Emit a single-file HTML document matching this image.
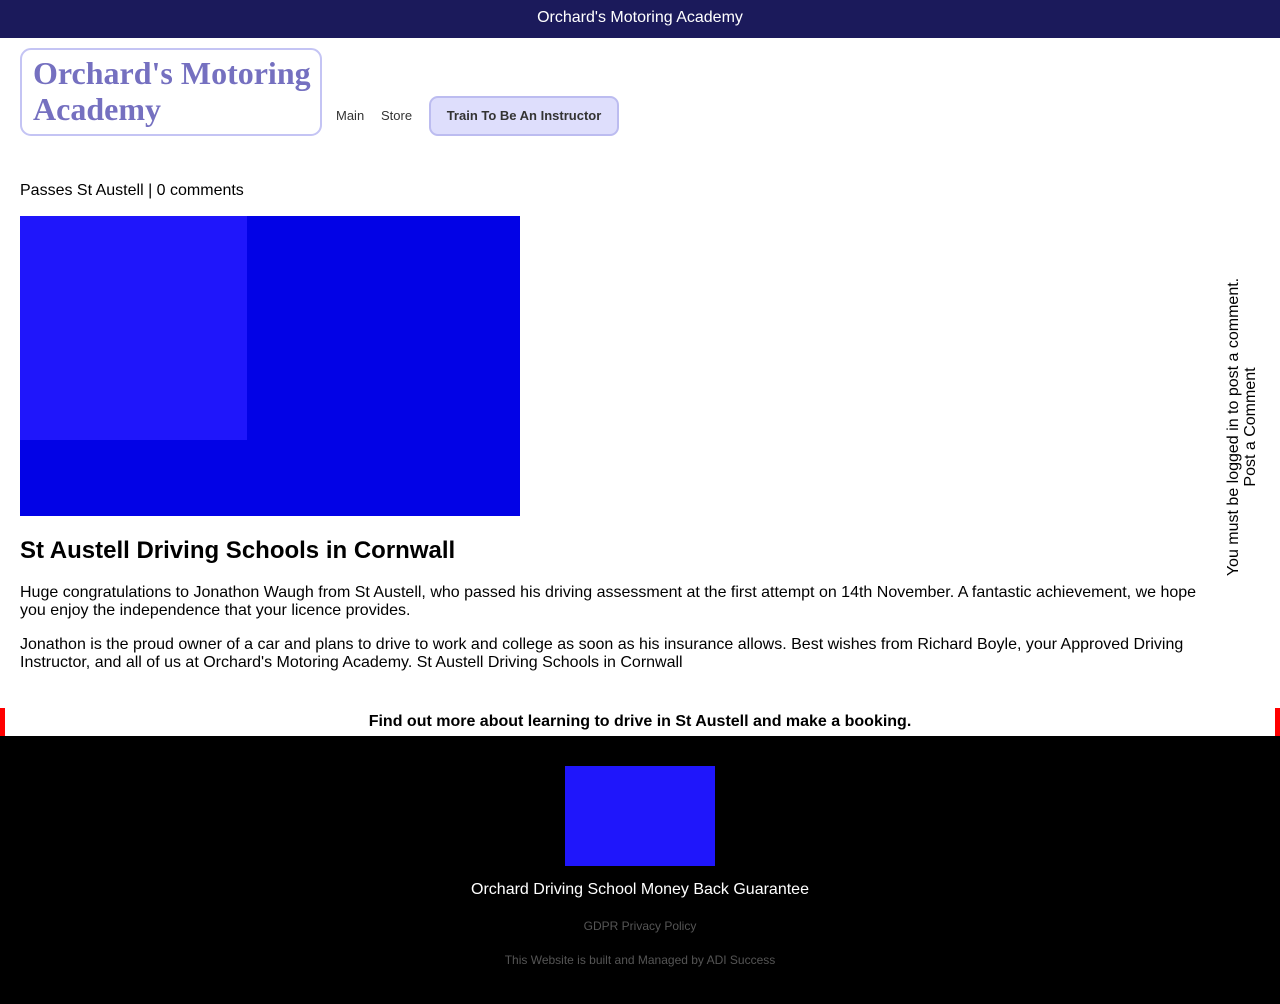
<!DOCTYPE html>
<html><head><meta charset="utf-8"><style>
*{margin:0;padding:0;box-sizing:border-box}
body{width:1280px;height:1004px;position:relative;background:#fff;font-family:"Liberation Sans",Arial,sans-serif;color:#000;overflow:hidden}
.top{position:absolute;left:0;top:0;width:1280px;height:38px;background:#1b1a5b;color:#fff;font-size:16px;text-align:center;line-height:36px}
.logo{position:absolute;left:20px;top:48px;width:302px;height:88px;border:2px solid #c4c4f4;border-radius:11px;font-family:"Liberation Serif",serif;font-weight:bold;font-size:32px;line-height:36px;color:#7570c0;padding:5px 0 0 11px}
.nav{position:absolute;top:108px;font-size:13px;color:#333}
.btn{position:absolute;left:429px;top:96px;width:190px;height:40px;border:2px solid #bcbcf0;border-radius:9px;background:#dedefc;font-size:13px;font-weight:bold;color:#333;text-align:center;line-height:36px}
.meta{position:absolute;left:20px;top:182px;font-size:16px}
.img1{position:absolute;left:20px;top:216px;width:500px;height:300px;background:#0202e6}
.img2{position:absolute;left:20px;top:216px;width:227px;height:224px;background:#1f16fb}
h1{position:absolute;left:20px;top:537px;font-size:24px;font-weight:bold}
.p{position:absolute;left:20px;width:1190px;font-size:16px;line-height:18px}
.side{position:absolute;left:1242px;top:427px;width:400px;transform:translate(-50%,-50%) rotate(-90deg);text-align:center;font-size:16px;line-height:17px}
.bar{position:absolute;left:0;top:708px;width:1280px;height:28px;border-left:5px solid #f00;border-right:5px solid #f00;text-align:center;font-size:16px;font-weight:bold;line-height:27px}
.foot{position:absolute;left:0;top:736px;width:1280px;height:268px;background:#000;text-align:center}
.fimg{position:absolute;left:565px;top:30px;width:150px;height:100px;background:#1f16fb}
.ft{position:absolute;width:1280px;left:0}
</style></head><body>
<div class="top">Orchard's Motoring Academy</div>
<div class="logo">Orchard's Motoring<br>Academy</div>
<div class="nav" style="left:336px">Main</div>
<div class="nav" style="left:381px">Store</div>
<div class="btn">Train To Be An Instructor</div>
<div class="meta">Passes St Austell | 0 comments</div>
<div class="img1"></div><div class="img2"></div>
<h1>St Austell Driving Schools in Cornwall</h1>
<div class="p" style="top:584px">Huge congratulations to Jonathon Waugh from St Austell, who passed his driving assessment at the first attempt on 14th November. A fantastic achievement, we hope you enjoy the independence that your licence provides.</div>
<div class="p" style="top:636px">Jonathon is the proud owner of a car and plans to drive to work and college as soon as his insurance allows. Best wishes from Richard Boyle, your Approved Driving Instructor, and all of us at Orchard's Motoring Academy. St Austell Driving Schools in Cornwall</div>
<div class="side">You must be logged in to post a comment.<br>Post a Comment</div>
<div class="bar">Find out more about learning to drive in St Austell and make a booking.</div>
<div class="foot">
<div class="fimg"></div>
<div class="ft" style="top:145px;color:#fff;font-size:16px">Orchard Driving School Money Back Guarantee</div>
<div class="ft" style="top:183px;color:#555;font-size:12px">GDPR Privacy Policy</div>
<div class="ft" style="top:217px;color:#555;font-size:12px">This Website is built and Managed by ADI Success</div>
</div>
</body></html>
